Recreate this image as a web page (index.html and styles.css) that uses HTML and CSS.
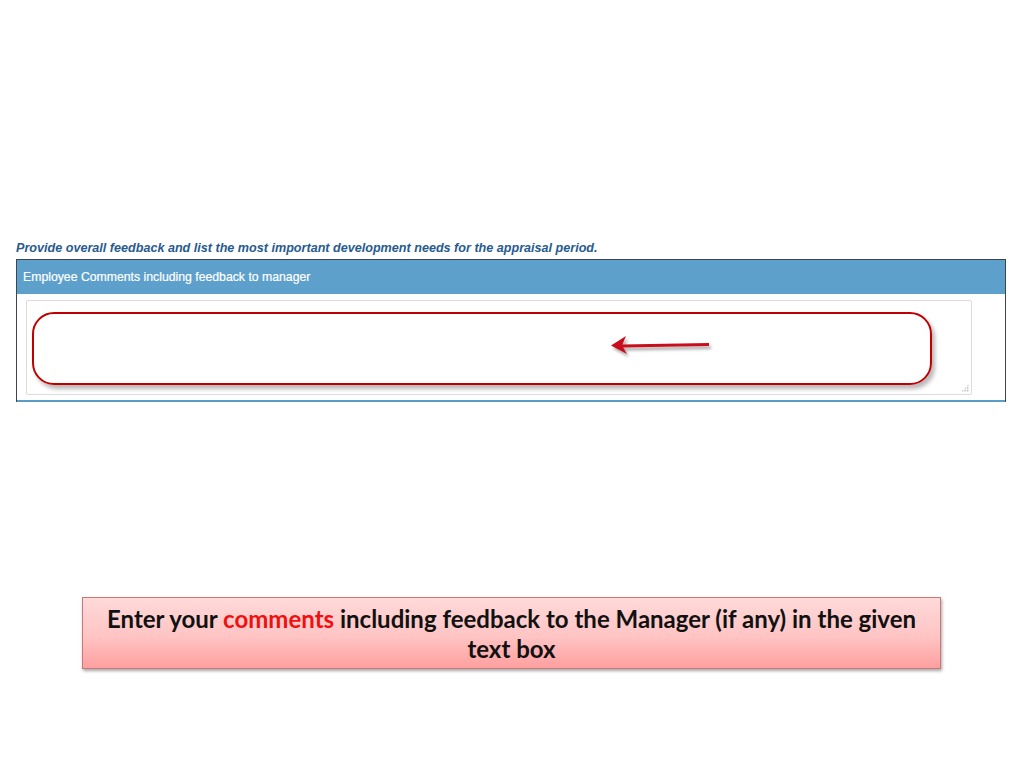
FILE: index.html
```html
<!DOCTYPE html>
<html lang="en">
<head>
<meta charset="utf-8">
<title>Employee Comments</title>
<link rel="stylesheet" href="styles.css">
</head>
<body>
<main class="page">
  <section class="form">
    <p class="form-title">Provide overall feedback and list the most important development needs for the appraisal period.</p>
    <div class="panel">
      <div class="panel-header">Employee Comments including feedback to manager</div>
      <div class="panel-body">
        <div class="field">
          <textarea class="comments" aria-label="Employee Comments including feedback to manager"></textarea>
          <span class="grip"></span>
          <div class="highlight"></div>
          <svg class="arrow" width="110" height="26" viewBox="0 0 110 26">
            <defs>
              <filter id="sh" x="-20%" y="-50%" width="140%" height="200%">
                <feDropShadow dx="2" dy="3" stdDeviation="1.5" flood-color="#000" flood-opacity="0.35"/>
              </filter>
            </defs>
            <g filter="url(#sh)">
              <path d="M14 11.5 L101 10 L101 13 L14 14.5 Z" fill="#c8101a"/>
              <path d="M3 12.5 L18 3 L14 12.5 L19 21 Z" fill="#c8101a"/>
            </g>
          </svg>
        </div>
      </div>
    </div>
  </section>
  <div class="callout">
    <p class="callout-text">Enter your <span class="accent">comments</span> including feedback to the Manager (if any) in the given<br>text box</p>
  </div>
</main>
</body>
</html>
```

FILE: styles.css
```css
html, body {
  margin: 0;
  padding: 0;
  background: #ffffff;
}

.page {
  width: 1024px;
  height: 768px;
  display: flex;
  flex-direction: column;
  padding-top: 241px;
  box-sizing: border-box;
}

.form {
  margin: 0 18px 0 16px;
}

.form-title {
  margin: 0 0 4px 0;
  font-family: "Liberation Sans", Arial, sans-serif;
  font-size: 12.6px;
  line-height: 14px;
  font-weight: bold;
  font-style: italic;
  color: #275b8e;
  white-space: nowrap;
}

.panel {
  border: 1px solid #3b4652;
  border-bottom: none;
  background: #ffffff;
}

.panel-header {
  height: 34px;
  background: #5da0cc;
  color: #ffffff;
  font-family: "Liberation Sans", Arial, sans-serif;
  font-size: 12.25px;
  line-height: 34px;
  padding-left: 6px;
  -webkit-text-stroke: 0.2px #ffffff;
}

.panel-body {
  padding: 6px 33px 5px 9px;
  border-bottom: 2px solid #5b9cc6;
}

.field {
  position: relative;
  height: 95px;
}

.comments {
  display: block;
  box-sizing: border-box;
  width: 100%;
  height: 95px;
  margin: 0;
  border: 1px solid #dcdcdc;
  border-radius: 2px;
  background: #ffffff;
  resize: none;
  outline: none;
}

.grip {
  position: absolute;
  right: 3px;
  bottom: 3px;
  width: 8px;
  height: 8px;
  background:
    radial-gradient(circle, #b8b8b8 0.8px, transparent 1px) 0 0 / 2.7px 2.7px;
  clip-path: polygon(100% 0, 100% 100%, 0 100%);
  pointer-events: none;
}

.highlight {
  position: absolute;
  left: 6px;
  top: 12px;
  width: 896px;
  height: 69px;
  border: 2px solid #c00000;
  border-radius: 22px;
  box-shadow: 3px 4px 4px rgba(0, 0, 0, 0.28);
  pointer-events: none;
}

.arrow {
  position: absolute;
  left: 582px;
  top: 33px;
}

.callout {
  margin: 195px 0 0 82px;
  width: 859px;
  height: 72px;
  box-sizing: border-box;
  border: 1px solid #c97878;
  background: linear-gradient(to bottom, #ffd9d9 0%, #ffc4c4 55%, #ff9f9f 100%);
  box-shadow: 1px 2px 3px rgba(0, 0, 0, 0.35);
  display: flex;
  align-items: center;
  justify-content: center;
  padding-top: 2px;
}

.callout-text {
  margin: 0;
  text-align: center;
  font-family: "Lato", "Liberation Sans", Arial, sans-serif;
  font-weight: bold;
  font-size: 24px;
  line-height: 30px;
  color: #111111;
  white-space: nowrap;
}

.accent {
  color: #f01010;
}
```
